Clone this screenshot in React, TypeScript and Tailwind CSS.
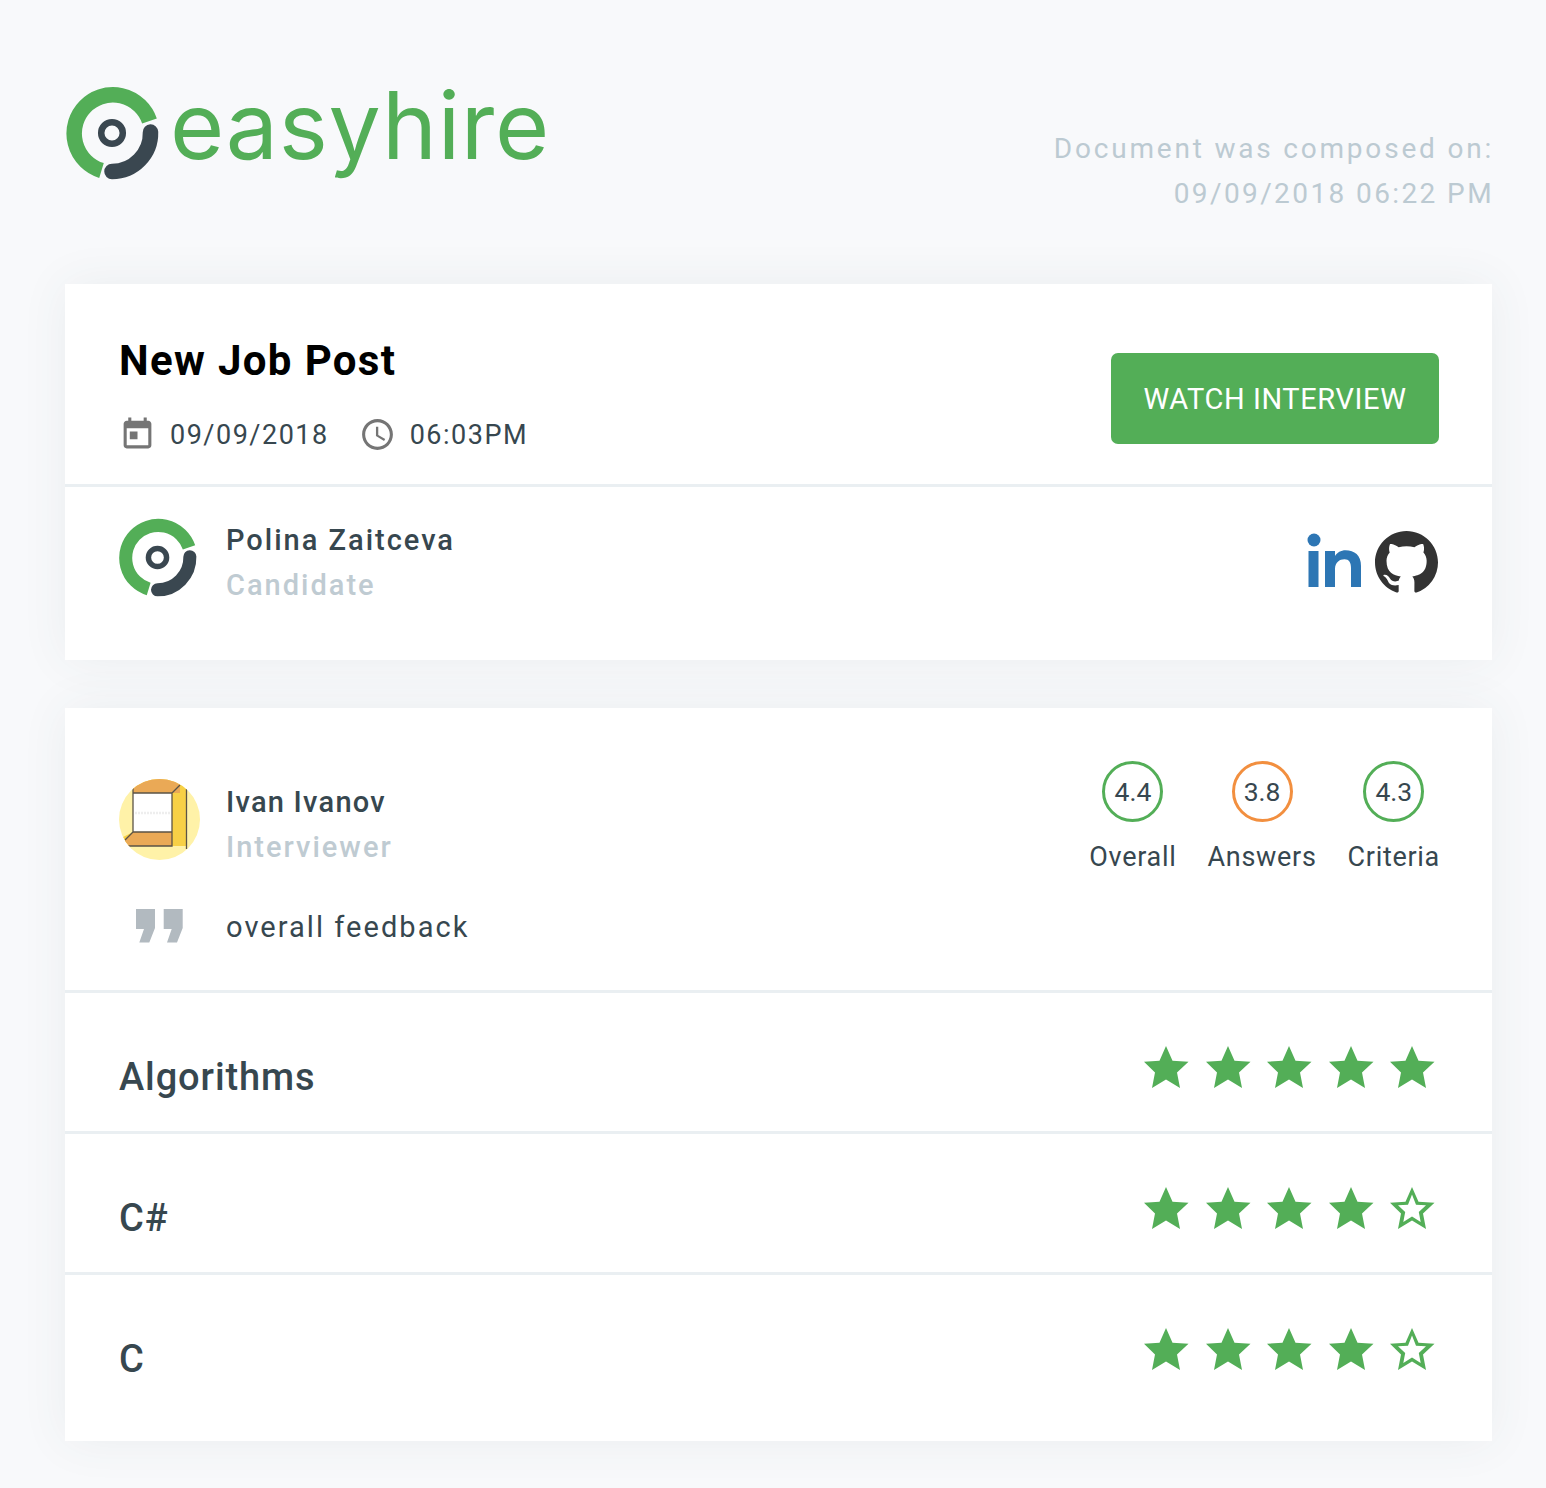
const GREEN = "#53ae57"
const SLATE = "#3a4750"

const LogoMark = ({ size, className = "" }: { size: number; className?: string }) => (
  <svg width={size} height={size} viewBox="0 0 94 94" fill="none" className={`shrink-0 ${className}`}>
    <path d="M36.500 84.500 A38.700 38.700 0 1 1 84.500 35" stroke={GREEN} strokeWidth="15.500" />
    <path d="M85.500 46 A38.500 38.500 0 0 1 47 85.500" stroke={SLATE} strokeWidth="15.500" strokeLinecap="round" />
    <circle cx="47" cy="47" r="10.800" stroke={SLATE} strokeWidth="6.500" />
  </svg>
)

const InterviewerAvatar = () => (
  <svg width="81" height="81" viewBox="0 0 81 81" className="shrink-0">
    <clipPath id="avatar-clip"><circle cx="40.500" cy="40.500" r="40.500" /></clipPath>
    <g clipPath="url(#avatar-clip)">
      <rect width="81" height="81" fill="#fff2a8" />
      <path d="M14 0H68V67H0V60L14 53Z" fill="#f7d046" />
      <path d="M14 0H61V14L53 14H14Z" fill="#eaa956" />
      <path d="M14 53H53V67H6V60Z" fill="#eaa956" />
      <rect x="14" y="14" width="39" height="39" fill="#ffffff" />
      <path d="M14 5V53M14 14H53M14 53H53V67H7M53 14V53M53 14L61 6M14 53L6 61M67.500 10V70" stroke="#5b5346" strokeWidth="1.300" fill="none" />
      <path d="M16 34H52" stroke="#eeeeee" strokeWidth="2.500" strokeDasharray="2 1" />
    </g>
  </svg>
)

const STAR = "M22 0L28.500 14.800L44.500 15.800L33 26.500L36 42L22 33.500L8 42L11 26.500L0 15.800L15.500 14.800Z"
const STAR_HOLE = "M22 7.500L26 17.800L36 18.300L28.800 25L30.700 35L22 29.600L13.300 35L15.200 25L8 18.300L18 17.800Z"

const Star = ({ filled }: { filled: boolean }) => (
  <svg width="45" height="42" viewBox="0 0 45 42" className="shrink-0">
    <path d={filled ? STAR : `${STAR}${STAR_HOLE}`} fill={GREEN} fillRule="evenodd" />
  </svg>
)

const Skill = ({ name, stars, last = false }: { name: string; stars: number; last?: boolean }) => (
  <div className={`flex justify-between items-start pl-[54px] pr-[57px] pt-[53px] ${last ? "h-[166px]" : "h-[141px] border-b-[3px] border-[#eaeff2]"}`}>
    <div className="pt-[9px] text-[38px] leading-[45px] font-medium text-[#37474f] tracking-[0.9px]">{name}</div>
    <div className="flex gap-[16.500px]">
      {[1, 2, 3, 4, 5].map((n) => <Star key={n} filled={n <= stars} />)}
    </div>
  </div>
)

const Score = ({ value, label, orange = false }: { value: string; label: string; orange?: boolean }) => (
  <div className="flex flex-col items-center">
    <div className={`w-[61px] h-[61px] rounded-full border-[3px] flex items-center justify-center text-[26.500px] text-[#37474f] ${orange ? "border-[#f28f3f]" : "border-[#53ae57]"}`}>{value}</div>
    <div className="mt-[13px] text-[27px] leading-[45px] tracking-[0.700px] text-[#37474f]">{label}</div>
  </div>
)

const Person = ({ name, role, avatar, nameClass = "tracking-[2px]", textClass = "" }: { name: string; role: string; avatar: React.ReactNode; nameClass?: string; textClass?: string }) => (
  <div className="flex items-start gap-[26px]">
    {avatar}
    <div className={`text-[29px] leading-[45px] font-medium tracking-[2px] ${textClass}`}>
      <div className={`text-[#37474f] ${nameClass}`}>{name}</div>
      <div className="text-[#bfcbd2]">{role}</div>
    </div>
  </div>
)

export default function App() {
  return (
    <div className="min-h-[1488px] bg-[#f8f9fb] pl-[65px] pr-[54px] font-['Roboto',sans-serif]">
      {/* Header */}
      <div className="h-[284px] flex justify-between items-start">
        <div className="flex items-center pt-[83px] gap-[11px]">
          <LogoMark size={94} />
          <span className="font-['Inter',sans-serif] text-[93px] leading-[84px] pb-[16px] tracking-[0.700px] text-[#53ae57]">easyhire</span>
        </div>
        <div className="pt-[126px] -mr-[2px] text-right text-[28px] leading-[45px] text-[#bccad2]">
          <div className="tracking-[2.800px]">Document was composed on:</div>
          <div className="tracking-[2.400px]">09/09/2018 06:22 PM</div>
        </div>
      </div>

      {/* Job card */}
      <div className="bg-white shadow-[0_0_45px_rgba(60,90,90,0.07)]">
        <div className="h-[203px] border-b-[3px] border-[#eaeff2] pl-[54px] pr-[53px] flex justify-between items-start">
          <div className="pt-[51px]">
            <h1 className="text-[42px] leading-[52px] font-bold tracking-[1.350px] text-black">New Job Post</h1>
            <div className="mt-[29px] flex items-center text-[27px] leading-[37px] tracking-[1.500px] text-[#37474f]">
              <svg width="37" height="37" viewBox="0 0 24 24" fill="#757575" className="shrink-0 mb-[2px]">
                <path d="M19 3h-1V1h-2v2H8V1H6v2H5c-1.110 0-1.990.9-1.990 2L3 19c0 1.100.89 2 2 2h14c1.100 0 2-.9 2-2V5c0-1.100-.9-2-2-2zm0 16H5V8h14v11zM7 10h5v5H7z" />
              </svg>
              <span className="ml-[14px]">09/09/2018</span>
              <svg width="37" height="37" viewBox="0 0 24 24" fill="#757575" className="shrink-0 ml-[30px] mb-[2px]">
                <path d="M11.990 2C6.470 2 2 6.480 2 12s4.470 10 9.990 10C17.520 22 22 17.520 22 12S17.520 2 11.990 2zM12 20c-4.420 0-8-3.580-8-8s3.580-8 8-8 8 3.580 8 8-3.580 8-8 8zm.5-13H11v6l5.250 3.150.75-1.230-4.500-2.670z" />
              </svg>
              <span className="ml-[14px]">06:03PM</span>
            </div>
          </div>
          <button className="mt-[69px] w-[328px] h-[91px] pt-[2px] rounded-[7px] bg-[#53ae57] text-white text-[29px] tracking-[0.600px]">WATCH INTERVIEW</button>
        </div>
        <div className="h-[173px] pt-[31px] px-[54px] flex justify-between items-start">
          <Person name="Polina Zaitceva" role="Candidate" avatar={<LogoMark size={79} className="-ml-[1px] mr-[3px]" />} />
          <div className="flex items-center gap-[12px] mt-[13px]">
            <svg width="56" height="56" viewBox="0 0 56 56" fill="#2d76b4" className="shrink-0 mb-[6px]">
              <circle cx="7" cy="8" r="6.500" />
              <rect x="1.500" y="19" width="10" height="36" />
              <path d="M18 19h10v5c2-3.500 6-5.800 10.500-5.800 9 0 15.500 5 15.500 15.800v21H44V36c0-5.500-2-8.800-6.500-8.800-5 0-9.500 3.300-9.500 9.500V55H18z" />
            </svg>
            <svg width="63" height="63" viewBox="0 0 16 16" fill="#333333" className="shrink-0">
              <path d="M8 0C3.580 0 0 3.580 0 8c0 3.540 2.290 6.530 5.470 7.590.4.07.55-.17.55-.38 0-.19-.01-.82-.01-1.490-2.010.37-2.530-.49-2.690-.94-.09-.23-.48-.94-.82-1.130-.28-.15-.68-.52-.01-.53.63-.01 1.080.58 1.230.82.72 1.210 1.870.87 2.330.66.07-.52.28-.87.51-1.070-1.780-.2-3.640-.89-3.640-3.950 0-.87.31-1.590.82-2.150-.08-.2-.36-1.020.08-2.120 0 0 .67-.21 2.200.82.64-.18 1.320-.27 2-.27.68 0 1.360.09 2 .27 1.530-1.040 2.200-.82 2.200-.82.44 1.100.16 1.920.08 2.120.51.56.82 1.270.82 2.150 0 3.070-1.870 3.750-3.650 3.950.29.25.54.73.54 1.480 0 1.070-.01 1.930-.01 2.200 0 .21.15.46.55.38A8.013 8.013 0 0016 8c0-4.420-3.580-8-8-8z" />
            </svg>
          </div>
        </div>
      </div>

      {/* Interview card */}
      <div className="mt-[48px] bg-white shadow-[0_0_45px_rgba(60,90,90,0.07)]">
        <div className="h-[285px] border-b-[3px] border-[#eaeff2] pl-[54px] pr-[52px] flex justify-between items-start">
          <div className="pt-[71px]">
            <Person name="Ivan Ivanov" role="Interviewer" avatar={<InterviewerAvatar />} nameClass="tracking-[1.250px]" textClass="pt-[1px]" />
            <div className="mt-[35px] flex items-start">
              <svg width="47" height="34" viewBox="0 0 47 34" fill="#b2bac0" className="shrink-0 ml-[17px] mt-[4px]">
                <path d="M0 0H19V19L13.300 33.500H3.300L8 20H0Z" />
                <path d="M27.700 0H46.700V19L41 33.500H31L35.700 20H27.700Z" />
              </svg>
              <span className="ml-[43px] text-[29px] leading-[45px] tracking-[2.050px] text-[#37474f]">overall feedback</span>
            </div>
          </div>
          <div className="pt-[53px] flex gap-[31px]">
            <Score value="4.4" label="Overall" />
            <Score value="3.8" label="Answers" orange />
            <Score value="4.3" label="Criteria" />
          </div>
        </div>
        <Skill name="Algorithms" stars={5} />
        <Skill name="C#" stars={4} />
        <Skill name="C" stars={4} last />
      </div>
    </div>
  )
}
